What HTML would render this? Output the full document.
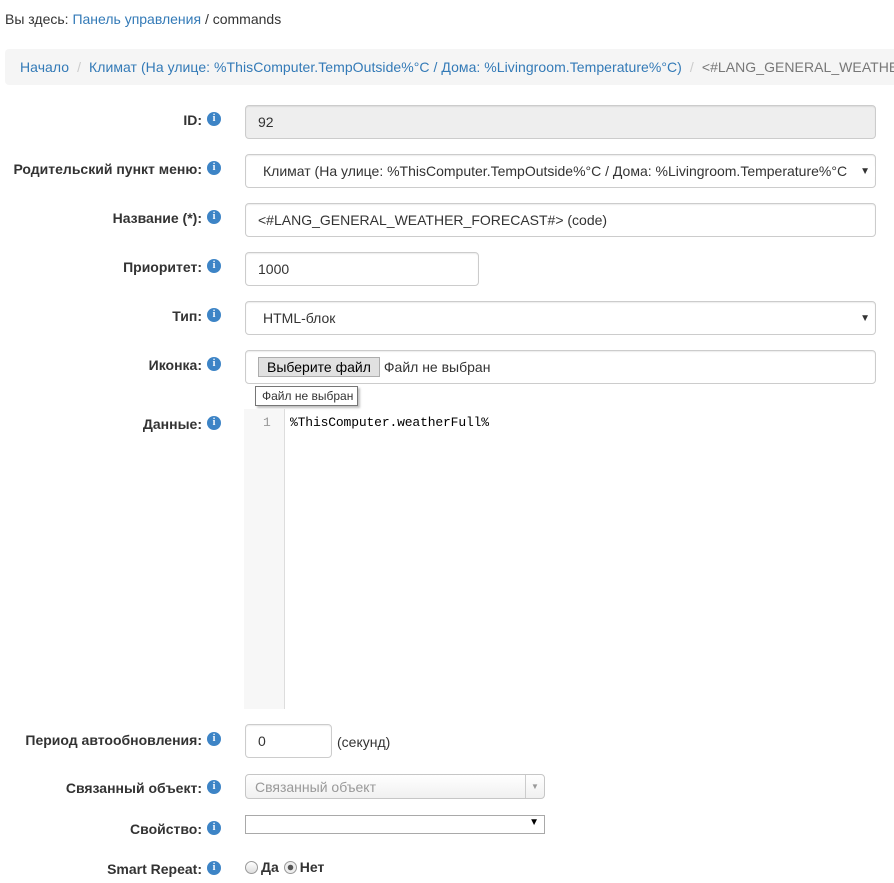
<!DOCTYPE html>
<html><head><meta charset="utf-8"><style>
*{box-sizing:border-box}
body{margin:0;width:894px;height:883px;overflow:hidden;background:#fff;font-family:"Liberation Sans",Arial,sans-serif;font-size:14px;color:#333;position:relative}
.a{position:absolute}
a{color:#337ab7;text-decoration:none}
.lbl{position:absolute;right:692px;font-weight:bold;white-space:nowrap;text-align:right}
.ic{position:absolute;left:207px;width:14px;height:14px;border-radius:50%;background:#3d84c6;color:#fff;font:bold 10px/14px "Liberation Serif",serif;text-align:center}
.in{position:absolute;border:1px solid #ccc;border-radius:4px;padding:0 12px;display:flex;align-items:center;background:#fff;white-space:nowrap;overflow:hidden;box-shadow:inset 0 1px 1px rgba(0,0,0,.075)}
.arr{position:absolute;right:4px;font-size:10px;color:#333}
.mono{font-family:"Liberation Mono","DejaVu Sans Mono",monospace;font-size:13px}
</style></head><body>
<div class="a" style="left:5px;top:11px">Вы здесь: <a>Панель управления</a> / commands</div>
<div class="a" style="left:5px;top:49px;width:889px;height:36px;background:#f5f5f5;border-radius:4px 0 0 4px;padding:10px 15px;white-space:nowrap;overflow:hidden;letter-spacing:0.05px"><a>Начало</a><span style="color:#ccc;padding:0 8px">/</span><a>Климат (На улице: %ThisComputer.TempOutside%°C / Дома: %Livingroom.Temperature%°C)</a><span style="color:#ccc;padding:0 8px">/</span><span style="color:#777">&lt;#LANG_GENERAL_WEATHER_FORECAST#&gt; (code)</span></div>

<div class="lbl" style="top:112px">ID:</div><div class="ic" style="top:112px">i</div>
<div class="in" style="left:245px;top:105px;width:631px;height:34px;background:#eee">92</div>

<div class="lbl" style="top:161px">Родительский пункт меню:</div><div class="ic" style="top:161px">i</div>
<div class="in" style="left:245px;top:154px;width:631px;height:34px;padding-left:17px">Климат (На улице: %ThisComputer.TempOutside%°C / Дома: %Livingroom.Temperature%°C<span class="arr" style="right:0;background:#fff;padding:0 5px 0 8px">▼</span></div>

<div class="lbl" style="top:210px">Название (*):</div><div class="ic" style="top:210px">i</div>
<div class="in" style="left:245px;top:203px;width:631px;height:34px">&lt;#LANG_GENERAL_WEATHER_FORECAST#&gt; (code)</div>

<div class="lbl" style="top:259px">Приоритет:</div><div class="ic" style="top:259px">i</div>
<div class="in" style="left:245px;top:252px;width:234px;height:34px">1000</div>

<div class="lbl" style="top:308px">Тип:</div><div class="ic" style="top:308px">i</div>
<div class="in" style="left:245px;top:301px;width:631px;height:34px;padding-left:17px">HTML-блок<span class="arr" style="right:5px">▼</span></div>

<div class="lbl" style="top:357px">Иконка:</div><div class="ic" style="top:357px">i</div>
<div class="in" style="left:245px;top:350px;width:631px;height:34px"><span style="border:1px solid #adadad;background:#e1e1e1;padding:1px 8px;color:#000;font-size:14px">Выберите файл</span><span style="margin-left:4px">Файл не выбран</span></div>
<div class="a" style="left:255px;top:386px;width:103px;height:20px;border:1px solid #767676;background:#fff;font-size:12px;line-height:18px;padding-left:6px;box-shadow:2px 2px 2px rgba(0,0,0,.25)">Файл не выбран</div>

<div class="lbl" style="top:416px">Данные:</div><div class="ic" style="top:416px">i</div>
<div class="a" style="left:244px;top:409px;width:41px;height:300px;background:#f7f7f7;border-right:1px solid #ddd"></div>
<div class="a mono" style="left:263px;top:415px;color:#999">1</div>
<div class="a mono" style="left:290px;top:415px;color:#000;letter-spacing:-0.15px">%ThisComputer.weatherFull%</div>

<div class="lbl" style="top:732px">Период автообновления:</div><div class="ic" style="top:732px">i</div>
<div class="in" style="left:245px;top:724px;width:87px;height:34px">0</div>
<div class="a" style="left:337px;top:734px">(секунд)</div>

<div class="lbl" style="top:780px">Связанный объект:</div><div class="ic" style="top:780px">i</div>
<div class="in" style="left:245px;top:774px;width:300px;height:25px;padding-left:9px;color:#999;background:linear-gradient(#fff,#f0f0f0);box-shadow:none;border-color:#c6c6c6">Связанный объект<span style="position:absolute;right:0;top:0;bottom:0;width:19px;border-left:1px solid #ccc;font-size:8px;color:#999;text-align:center;line-height:24px">▼</span></div>

<div class="lbl" style="top:821px">Свойство:</div><div class="ic" style="top:821px">i</div>
<div class="a" style="left:245px;top:815px;width:300px;height:19px;border:1px solid #a9a9a9;background:#fff"><span style="position:absolute;right:5px;top:1px;font-size:10px;color:#000">▼</span></div>

<div class="lbl" style="top:861px">Smart Repeat:</div><div class="ic" style="top:861px">i</div>
<div class="a" style="left:245px;top:859px;font-weight:bold;display:flex;align-items:center;gap:3px">
<span style="width:13px;height:13px;border-radius:50%;border:1px solid #999;background:linear-gradient(#fff,#ddd);display:inline-block"></span>Да
<span style="width:13px;height:13px;border-radius:50%;border:1px solid #999;background:radial-gradient(#555 0 2.5px,#eee 3px);display:inline-block;margin-left:2px"></span>Нет</div>
</body></html>
